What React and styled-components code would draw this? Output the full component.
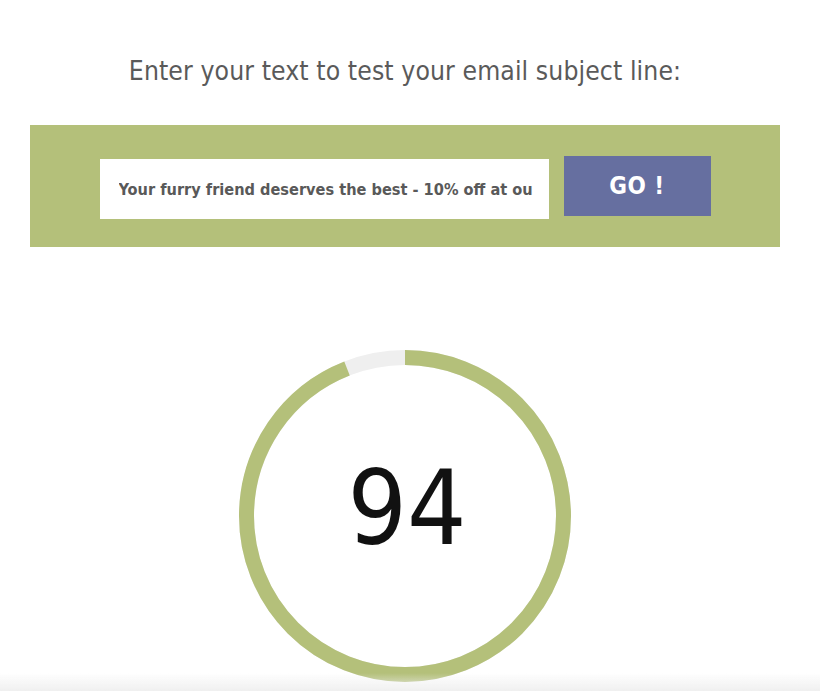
import React, { useState } from 'react';
import styled, { createGlobalStyle } from 'styled-components';

const GlobalStyle = createGlobalStyle`
  html, body {
    margin: 0;
    padding: 0;
    background: #fff;
  }
  body {
    font-family: Roboto, "Liberation Sans", sans-serif;
    overflow: hidden;
  }
`;

const Page = styled.div`
  width: 750px;
  height: 691px;
  margin-left: 30px;
  display: flex;
  flex-direction: column;
  align-items: center;
  position: relative;
`;

const Heading = styled.h2`
  margin: 52px 0 0;
  font-family: "DejaVu Sans Condensed", "DejaVu Sans", sans-serif;
  font-weight: 200;
  font-size: 26.3px;
  line-height: 38px;
  color: #5a5a5a;
  letter-spacing: 0.1px;
`;

const Banner = styled.form`
  margin-top: 35px;
  width: 100%;
  height: 122px;
  background: #b4c07a;
  display: flex;
  justify-content: center;
  align-items: center;
  gap: 15px;
`;

const SubjectInput = styled.input`
  box-sizing: border-box;
  width: 449px;
  height: 60px;
  margin-top: 6px;
  border: none;
  outline: none;
  padding: 0 16px 0 19px;
  font-family: "DejaVu Sans Condensed", "DejaVu Sans", sans-serif;
  font-weight: 600;
  font-size: 16.2px;
  color: #595959;
  background: #fff;
`;

const GoButton = styled.button`
  width: 147px;
  height: 60px;
  border: none;
  background: #666fa0;
  color: #fff;
  font-family: "DejaVu Sans Condensed", "DejaVu Sans", sans-serif;
  font-weight: bold;
  font-size: 24px;
  letter-spacing: 0.5px;
  cursor: pointer;
`;

const ScoreWrap = styled.div`
  margin-top: 103px;
  width: 332px;
  height: 332px;
  position: relative;
  display: flex;
  align-items: center;
  justify-content: center;
`;

const Ring = styled.svg`
  position: absolute;
  inset: 0;
`;

const Score = styled.div`
  position: relative;
  font-family: "DejaVu Sans Condensed", "DejaVu Sans", sans-serif;
  font-weight: 200;
  font-size: 104px;
  color: #111;
  margin-top: -16px;
  margin-left: 4px;
`;

const Fade = styled.div`
  position: fixed;
  left: 0;
  right: 0;
  bottom: 0;
  height: 18px;
  background: linear-gradient(rgba(240, 240, 240, 0), rgba(238, 238, 238, 0.9));
`;

const ScoreRing = ({ value }) => {
  const r = 158.5;
  const c = 2 * Math.PI * r;
  return (
    <Ring width="332" height="332" viewBox="0 0 332 332">
      <circle cx="166" cy="166" r={r} fill="none" stroke="#efefef" strokeWidth="15" />
      <circle
        cx="166"
        cy="166"
        r={r}
        fill="none"
        stroke="#b4c07a"
        strokeWidth="15"
        strokeDasharray={`${(c * value) / 100} ${c}`}
        transform="rotate(-90 166 166)"
      />
    </Ring>
  );
};

export default function App() {
  const [subject, setSubject] = useState('Your furry friend deserves the best - 10% off at our store today');
  const score = 94;

  return (
    <>
      <GlobalStyle />
      <Page>
        <Heading>Enter your text to test your email subject line:</Heading>
        <Banner onSubmit={(e) => e.preventDefault()}>
          <SubjectInput value={subject} onChange={(e) => setSubject(e.target.value)} />
          <GoButton type="submit">GO !</GoButton>
        </Banner>
        <ScoreWrap>
          <ScoreRing value={score} />
          <Score>{score}</Score>
        </ScoreWrap>
      </Page>
      <Fade />
    </>
  );
}
